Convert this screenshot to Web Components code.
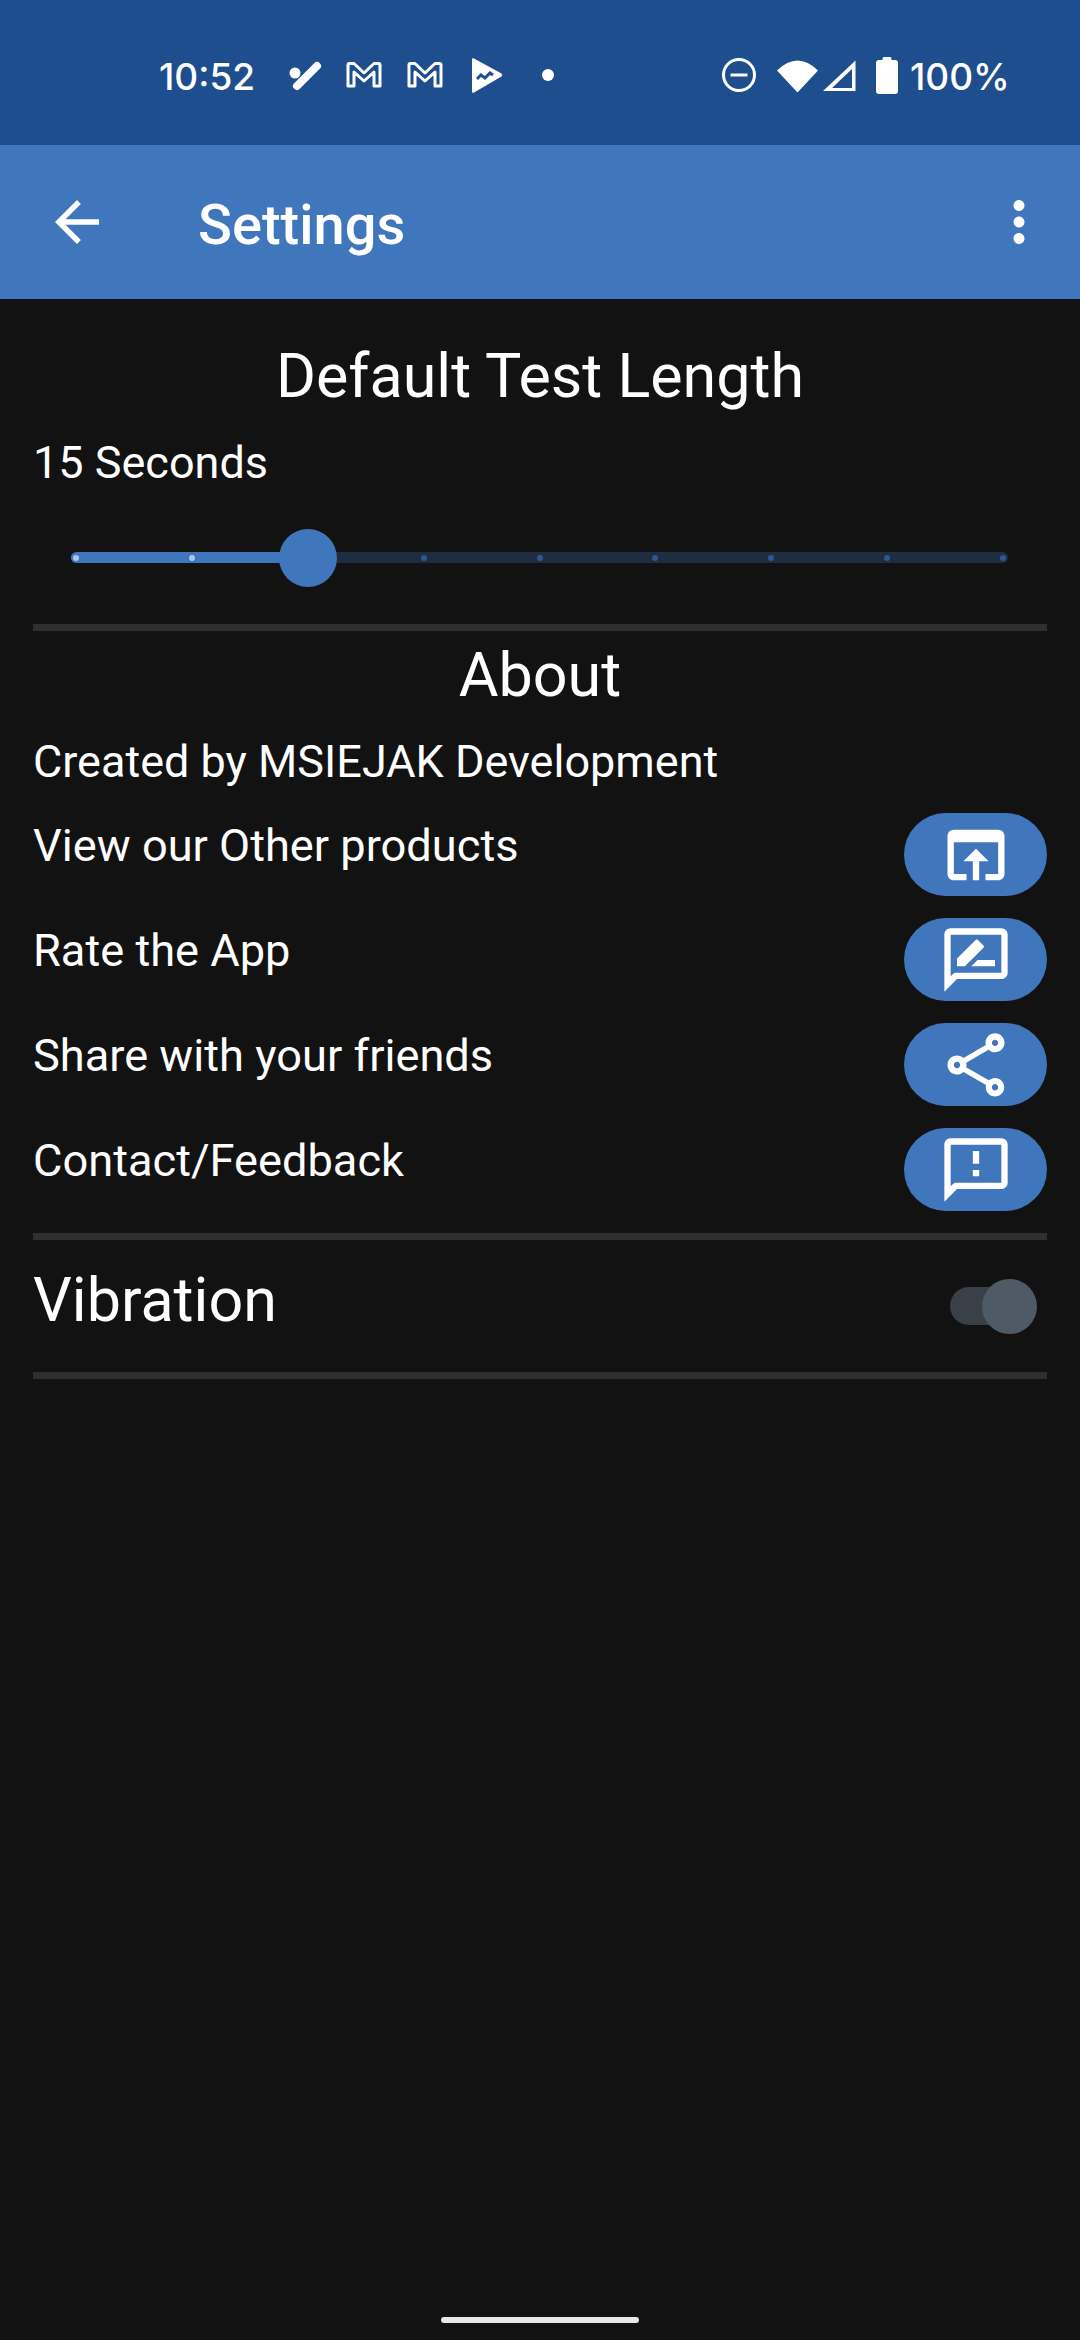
<!DOCTYPE html>
<html lang="en"><head><meta charset="utf-8"><title>Settings</title>
<style>
html,body{margin:0;padding:0;background:#121212}
body{width:1080px;height:2340px;font-family:Roboto,sans-serif;color:#fff;display:flex;flex-direction:column;overflow:hidden}
</style></head><body>
<status-bar></status-bar>
<app-bar>Settings</app-bar>
<settings-page>
  <section-title style="--top:41px">Default Test Length</section-title>
  <body-line style="--top:25px">15 Seconds</body-line>
  <tick-slider></tick-slider>
  <thick-rule style="--top:37px"></thick-rule>
  <section-title style="--top:8px">About</section-title>
  <body-line style="--top:25px">Created by MSIEJAK Development</body-line>
  <action-row style="--top:23px" icon="open">View our Other products</action-row>
  <action-row style="--top:22px" icon="rate">Rate the App</action-row>
  <action-row style="--top:22px" icon="share">Share with your friends</action-row>
  <action-row style="--top:22px" icon="feedback">Contact/Feedback</action-row>
  <thick-rule style="--top:22px"></thick-rule>
  <switch-row>Vibration</switch-row>
  <thick-rule></thick-rule>
</settings-page>
<nav-handle></nav-handle>
<script>
function def(name, html, init){
  customElements.define(name, class extends HTMLElement{
    constructor(){super();this.attachShadow({mode:'open'}).innerHTML=html;}
    connectedCallback(){ if(init) init(this); }
  });
}
def('status-bar',`<style>
:host{display:block;height:145px;background:#1f4e8e;flex:none}
.b{position:relative;height:145px;display:flex;align-items:flex-start;font-family:Inter,Roboto,sans-serif;font-weight:500;font-size:37px;color:#fff}
svg{display:block;flex:none;fill:#fff}
.t{line-height:46px;margin-top:54px;flex:none}
</style><div class="b">
<span class="t" style="margin-left:159px;width:96px">10:52</span>
<svg style="margin:60px 0 0 30px" width="40" height="32" viewBox="0 0 40 32"><circle cx="10" cy="13" r="5.500"/><path d="M12 26 32 6" stroke="#fff" stroke-width="8" stroke-linecap="round"/></svg>
<svg style="margin:62px 0 0 21px" width="36" height="26" viewBox="0 0 36 26"><path d="M2 24V3q0-1.500 1.500-1.500H8L18 11 28 1.500h4.500Q34 1.500 34 3V24H28V10L18 19 8 10V24Z" fill="none" stroke="#fff" stroke-width="3" stroke-linejoin="round"/></svg>
<svg style="margin:62px 0 0 25px" width="36" height="26" viewBox="0 0 36 26"><path d="M2 24V3q0-1.500 1.500-1.500H8L18 11 28 1.500h4.500Q34 1.500 34 3V24H28V10L18 19 8 10V24Z" fill="none" stroke="#fff" stroke-width="3" stroke-linejoin="round"/></svg>
<svg style="margin:57px 0 0 28px" width="32" height="37" viewBox="0 0 32 37"><path d="M1 2.500Q1 .5 3 1.500L30.500 16.500Q32 18 30.500 19.500L3 35.500Q1 36.500 1 34.500Z"/><path d="M6 22l4-4 4 3 5-5 3 2" fill="none" stroke="#1f4e8e" stroke-width="3"/></svg>
<svg style="margin:69px 0 0 39px" width="12" height="12" viewBox="0 0 12 12"><circle cx="6" cy="6" r="6"/></svg>
<svg style="margin:57px 0 0 167px" width="36" height="36" viewBox="0 0 36 36"><circle cx="18" cy="18" r="15.500" fill="none" stroke="#fff" stroke-width="3"/><path d="M9.500 16.500h17v3h-17z"/></svg>
<svg style="margin:58px 0 0 19px" width="43" height="35" viewBox="0 0 43 35"><path d="M1 12.500Q21.500-7.500 42 12.500L21.500 34.500Z"/></svg>
<svg style="margin:58px 0 0 2px" width="36" height="35" viewBox="0 0 36 35"><path d="M34.500 2.500V33H2ZM31 11 11 30h20Z" fill-rule="evenodd"/></svg>
<svg style="margin:57px 0 0 19px" width="22" height="37" viewBox="0 0 22 37"><path d="M6.500 3V1.500Q6.500 0 8 0h6q1.500 0 1.500 1.500V3H19q3 0 3 3V34q0 3-3 3H3q-3 0-3-3V6q0-3 3-3Z"/></svg>
<span class="t" style="margin-left:12px">100%</span>
</div>`);
def('app-bar',`<style>
:host{display:flex;align-items:center;height:154px;background:#3f76bc;flex:none;font:500 56px/64px Roboto,sans-serif;color:#fff}
svg{fill:#fff;display:block;flex:none}
.s{flex:1;margin-left:88px;padding-top:6px}
</style>
<svg style="margin-left:44px" width="66" height="66" viewBox="0 0 24 24"><path d="M20 11H7.830l5.590-5.590L12 4l-8 8 8 8 1.410-1.410L7.830 13H20v-2z"/></svg>
<span class="s"><slot></slot></span>
<svg style="margin-right:28px" width="66" height="66" viewBox="0 0 24 24"><path d="M12 8c1.100 0 2-.9 2-2s-.9-2-2-2-2 .9-2 2 .9 2 2 2zm0 2c-1.100 0-2 .9-2 2s.9 2 2 2 2-.9 2-2-.9-2-2-2zm0 6c-1.100 0-2 .9-2 2s.9 2 2 2 2-.9 2-2-.9-2-2-2z"/></svg>`);
def('settings-page',`<style>:host{display:flex;flex-direction:column;flex:1;padding:0 33px;font-family:Roboto,sans-serif;color:#fff}</style><slot></slot>`);
def('section-title',`<style>:host{display:block;flex:none;margin-top:var(--top,0);height:70px;line-height:72px;font-size:61px;text-align:center;white-space:nowrap}</style><slot></slot>`);
def('body-line',`<style>:host{display:block;flex:none;margin-top:var(--top,0);height:56px;line-height:56px;font-size:45px;white-space:nowrap}</style><slot></slot>`);
def('thick-rule',`<style>:host{display:block;flex:none;margin-top:var(--top,0);height:7px;background:#2f2f2f}</style>`);
def('tick-slider',`<style>
:host{display:block;flex:none;margin:38px 39px 0 38px;height:58px;position:relative}
.track{position:absolute;left:0;right:0;top:23px;height:11px;border-radius:6px;background:#1f2d40;display:flex;justify-content:space-between;align-items:center;padding:0 2px}
.fill{position:absolute;left:0;top:0;height:11px;width:237px;border-radius:6px 0 0 6px;background:#3f76bc}
i{position:relative;width:6px;height:6px;border-radius:50%;background:#2f5790}
i.on{background:#a9c8ef}
.thumb{position:absolute;left:208px;top:0;width:58px;height:58px;border-radius:50%;background:#3f76bc}
</style><div class="track"><div class="fill"></div><i class="on"></i><i class="on"></i><i></i><i></i><i></i><i></i><i></i><i></i><i></i></div><div class="thumb"></div>`);
const ICONS={
open:'M19 4H5c-1.110 0-2 .9-2 2v12c0 1.100.89 2 2 2h4v-2H5V8h14v10h-4v2h4c1.100 0 2-.9 2-2V6c0-1.100-.89-2-2-2zm-7 6l-4 4h3v6h2v-6h3l-4-4z',
rate:'M20 2H4c-1.100 0-1.990.9-1.990 2L2 22l4-4h14c1.100 0 2-.9 2-2V4c0-1.100-.9-2-2-2zm0 14H5.170l-.59.59-.58.58V4h16v12zm-9.500-2H18v-2h-5.500zm3.860-5.870c.2-.2.2-.51 0-.71l-1.770-1.770c-.2-.2-.51-.2-.71 0L6 11.530V14h2.470l5.890-5.870z',
share:'M18 16.080c-.76 0-1.440.3-1.960.77L8.910 12.700c.05-.23.09-.46.09-.7s-.04-.47-.09-.7l7.050-4.110c.54.5 1.250.81 2.040.81 1.660 0 3-1.340 3-3s-1.340-3-3-3-3 1.340-3 3c0 .24.04.47.09.7L8.040 9.810C7.500 9.310 6.790 9 6 9c-1.660 0-3 1.340-3 3s1.340 3 3 3c.79 0 1.500-.31 2.040-.81l7.120 4.160c-.05.21-.08.43-.08.65 0 1.610 1.310 2.920 2.920 2.920s2.920-1.310 2.920-2.920c0-1.610-1.310-2.920-2.920-2.920zM18 4c.55 0 1 .45 1 1s-.45 1-1 1-1-.45-1-1 .45-1 1-1zM6 13c-.55 0-1-.45-1-1s.45-1 1-1 1 .45 1 1-.45 1-1 1zm12 7.020c-.55 0-1-.45-1-1s.45-1 1-1 1 .45 1 1-.45 1-1 1z',
feedback:'M20 2H4c-1.100 0-1.990.9-1.990 2L2 22l4-4h14c1.100 0 2-.9 2-2V4c0-1.100-.9-2-2-2zm0 14H5.170l-.59.59-.58.58V4h16v12zM11 12h2v2h-2zm0-6h2v4h-2z'};
def('action-row',`<style>
:host{display:flex;flex:none;margin-top:var(--top,0);height:83px;justify-content:space-between;align-items:flex-start;font-size:45.200px;line-height:56px;white-space:nowrap}
.t{padding-top:5px}
.p{width:143px;height:83px;border-radius:42px;background:#3f76bc;display:flex;align-items:center;justify-content:center}
svg{width:76px;height:76px;fill:#fff;display:block}
</style><span class="t"><slot></slot></span><span class="p"><svg viewBox="0 0 24 24"><path></path></svg></span>`,
el=>{el.shadowRoot.querySelector('path').setAttribute('d',ICONS[el.getAttribute('icon')]);});
def('switch-row',`<style>
:host{display:flex;flex:none;height:132px;justify-content:space-between;font-size:61px;line-height:72px;white-space:nowrap}
.t{padding-top:24px}
.s{position:relative;width:87px;height:55px;margin:39px 10px 0 0}
.tr{position:absolute;left:0;top:8px;width:80px;height:38px;border-radius:19px;background:#394047}
.th{position:absolute;right:0;top:0;width:55px;height:55px;border-radius:50%;background:#4e5b67}
</style><span class="t"><slot></slot></span><span class="s"><span class="tr"></span><span class="th"></span></span>`);
def('nav-handle',`<style>
:host{display:flex;flex:none;height:42px;justify-content:center;background:#121212}
b{display:block;width:198px;height:6px;border-radius:3px;background:#e8e8e8;margin-top:19px}
</style><b></b>`);
</script>
</body></html>
